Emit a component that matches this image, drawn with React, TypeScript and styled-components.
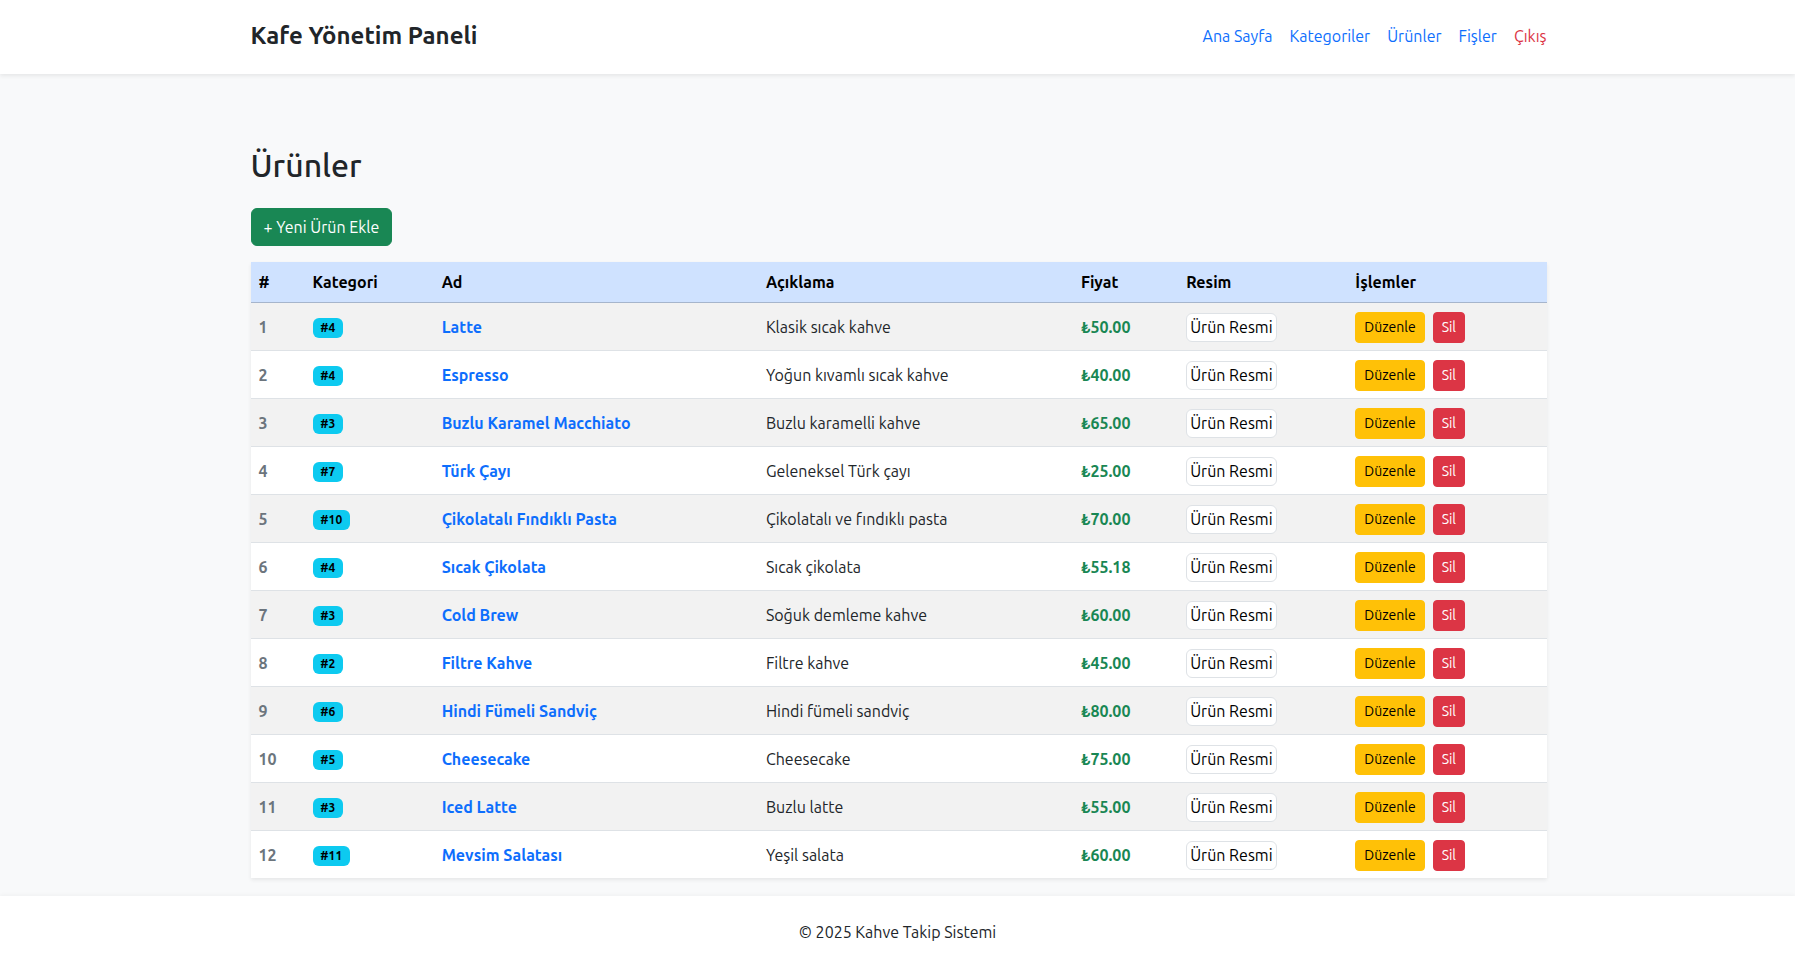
import React from "react";
import styled, { createGlobalStyle, css } from "styled-components";

interface Product {
  id: number;
  category: number;
  name: string;
  description: string;
  price: string;
}

const products: Product[] = [
  { id: 1, category: 4, name: "Latte", description: "Klasik sıcak kahve", price: "50.00" },
  { id: 2, category: 4, name: "Espresso", description: "Yoğun kıvamlı sıcak kahve", price: "40.00" },
  { id: 3, category: 3, name: "Buzlu Karamel Macchiato", description: "Buzlu karamelli kahve", price: "65.00" },
  { id: 4, category: 7, name: "Türk Çayı", description: "Geleneksel Türk çayı", price: "25.00" },
  { id: 5, category: 10, name: "Çikolatalı Fındıklı Pasta", description: "Çikolatalı ve fındıklı pasta", price: "70.00" },
  { id: 6, category: 4, name: "Sıcak Çikolata", description: "Sıcak çikolata", price: "55.18" },
  { id: 7, category: 3, name: "Cold Brew", description: "Soğuk demleme kahve", price: "60.00" },
  { id: 8, category: 2, name: "Filtre Kahve", description: "Filtre kahve", price: "45.00" },
  { id: 9, category: 6, name: "Hindi Fümeli Sandviç", description: "Hindi fümeli sandviç", price: "80.00" },
  { id: 10, category: 5, name: "Cheesecake", description: "Cheesecake", price: "75.00" },
  { id: 11, category: 3, name: "Iced Latte", description: "Buzlu latte", price: "55.00" },
  { id: 12, category: 11, name: "Mevsim Salatası", description: "Yeşil salata", price: "60.00" },
];

const navLinks = [
  { id: "home", label: "Ana Sayfa" },
  { id: "categories", label: "Kategoriler" },
  { id: "products", label: "Ürünler" },
  { id: "receipts", label: "Fişler" },
  { id: "logout", label: "Çıkış", danger: true },
];

const columns = [
  { id: "no", label: "#", width: 54 },
  { id: "category", label: "Kategori", width: 129 },
  { id: "name", label: "Ad", width: 324 },
  { id: "desc", label: "Açıklama", width: 315 },
  { id: "price", label: "Fiyat", width: 105 },
  { id: "image", label: "Resim", width: 169 },
  { id: "actions", label: "İşlemler", width: 199 },
];

const GlobalStyle = createGlobalStyle`
  * { box-sizing: border-box; }
  body {
    margin: 0;
    font-family: "Ubuntu", "Lato", "Noto Sans", sans-serif;
    font-size: 16px;
    line-height: 1.5;
    color: #212529;
    background: #fff;
  }
`;

const Page = styled.div`
  min-height: 100vh;
  display: flex;
  flex-direction: column;
`;

const Container = styled.div`
  width: 1320px;
  margin: 0 auto;
  padding: 0 11px 0 13px;
`;

const Navbar = styled.nav`
  background: #fff;
  height: 74px;
  padding-bottom: 2px;
  display: flex;
  align-items: center;
  box-shadow: 0 2px 4px rgba(0, 0, 0, 0.075);
  position: relative;
  z-index: 1;
  ${Container} {
    display: flex;
    align-items: center;
    justify-content: space-between;
  }
`;

const Brand = styled.a`
  font-size: 24px;
  font-weight: 700;
  color: #212529;
  text-decoration: none;
  line-height: 36px;
`;

const NavList = styled.ul`
  display: flex;
  gap: 17px;
  list-style: none;
  margin: 0;
  padding: 0;
`;

const NavLink = styled.a<{ $danger?: boolean }>`
  color: ${(p) => (p.$danger ? "#dc3545" : "#0d6efd")};
  text-decoration: none;
  font-size: 16px;
`;

const Main = styled.main`
  flex: 1;
  background: #f8f9fa;
  padding: 72px 0 16px;
`;

const Title = styled.h2`
  margin: 0 0 24px;
  font-size: 32px;
  font-weight: 500;
  line-height: 1.2;
  color: #212529;
`;

const Button = styled.button<{ $variant: "success" | "warning" | "danger"; $small?: boolean }>`
  font-family: inherit;
  border: 1px solid transparent;
  cursor: pointer;
  font-weight: 400;
  ${(p) =>
    p.$small
      ? css`
          font-size: 14px;
          line-height: 21px;
          padding: 4px 8px;
          border-radius: 4px;
        `
      : css`
          font-size: 16px;
          line-height: 24px;
          padding: 6px 12px;
          border-radius: 6px;
        `}
  ${(p) =>
    p.$variant === "success" &&
    css`
      background: #198754;
      border-color: #198754;
      color: #fff;
    `}
  ${(p) =>
    p.$variant === "warning" &&
    css`
      background: #ffc107;
      border-color: #ffc107;
      color: #000;
    `}
  ${(p) =>
    p.$variant === "danger" &&
    css`
      background: #dc3545;
      border-color: #dc3545;
      color: #fff;
    `}
`;

const AddBar = styled.div`
  margin-bottom: 16px;
`;

const Table = styled.table`
  width: 100%;
  table-layout: fixed;
  border-collapse: collapse;
  background: #fff;
  box-shadow: 0 2px 4px rgba(0, 0, 0, 0.075);
`;

const Col = styled.col<{ $width: number }>`
  width: ${(p) => p.$width}px;
`;

const HeadCell = styled.th`
  text-align: left;
  font-weight: 700;
  color: #000;
  background: #cfe2ff;
  padding: 8px;
  line-height: 24px;
  border-bottom: 1px solid #a6b5cc;
`;

const BodyRow = styled.tr<{ $striped: boolean }>`
  background: ${(p) => (p.$striped ? "#f2f2f2" : "#fff")};
  border-bottom: 1px solid #dee2e6;
  &:last-child {
    border-bottom: 0;
  }
`;

const Cell = styled.td`
  padding: 8px;
  vertical-align: middle;
  line-height: 24px;
  white-space: nowrap;
`;

const RowNumber = styled(Cell).attrs({ as: "th" })`
  text-align: left;
  font-weight: 700;
  color: #6c757d;
`;

const Badge = styled.span`
  display: inline-block;
  background: #0dcaf0;
  color: #000;
  font-size: 12px;
  font-weight: 700;
  line-height: 1;
  padding: 4.2px 7.8px;
  border-radius: 6px;
  vertical-align: 1px;
`;

const ProductLink = styled.a`
  color: #0d6efd;
  font-weight: 700;
  text-decoration: none;
`;

const Price = styled.span`
  color: #198754;
  font-weight: 700;
`;

const Thumb = styled.span`
  display: inline-block;
  background: #fff;
  border: 1px solid #dee2e6;
  border-radius: 6px;
  padding: 4px 3px;
  line-height: 19px;
  color: #000;
  vertical-align: -3px;
`;

const Actions = styled.div`
  display: flex;
  gap: 8px;
  margin: 1px 0 -1px;
`;

const Footer = styled.footer`
  background: #fff;
  text-align: center;
  padding: 24px 0;
  color: #212529;
  box-shadow: 0 -1px 4px rgba(0, 0, 0, 0.04);
`;

const App = () => {
  return (
    <Page>
      <GlobalStyle />
      <Navbar>
        <Container>
          <Brand href="#">Kafe Yönetim Paneli</Brand>
          <NavList>
            {navLinks.map((link) => (
              <li key={link.id}>
                <NavLink href="#" $danger={link.danger}>
                  {link.label}
                </NavLink>
              </li>
            ))}
          </NavList>
        </Container>
      </Navbar>

      <Main>
        <Container>
          <Title>Ürünler</Title>
          <AddBar>
            <Button $variant="success">+ Yeni Ürün Ekle</Button>
          </AddBar>
          <Table>
            <colgroup>
              {columns.map((c) => (
                <Col key={c.id} $width={c.width} />
              ))}
            </colgroup>
            <thead>
              <tr>
                {columns.map((c) => (
                  <HeadCell key={c.id}>{c.label}</HeadCell>
                ))}
              </tr>
            </thead>
            <tbody>
              {products.map((p, index) => (
                <BodyRow key={p.id} $striped={index % 2 === 0}>
                  <RowNumber>{p.id}</RowNumber>
                  <Cell>
                    <Badge>#{p.category}</Badge>
                  </Cell>
                  <Cell>
                    <ProductLink href="#">{p.name}</ProductLink>
                  </Cell>
                  <Cell>{p.description}</Cell>
                  <Cell>
                    <Price>₺{p.price}</Price>
                  </Cell>
                  <Cell>
                    <Thumb>Ürün Resmi</Thumb>
                  </Cell>
                  <Cell>
                    <Actions>
                      <Button $variant="warning" $small>
                        Düzenle
                      </Button>
                      <Button $variant="danger" $small>
                        Sil
                      </Button>
                    </Actions>
                  </Cell>
                </BodyRow>
              ))}
            </tbody>
          </Table>
        </Container>
      </Main>

      <Footer>© 2025 Kahve Takip Sistemi</Footer>
    </Page>
  );
};

export default App;
